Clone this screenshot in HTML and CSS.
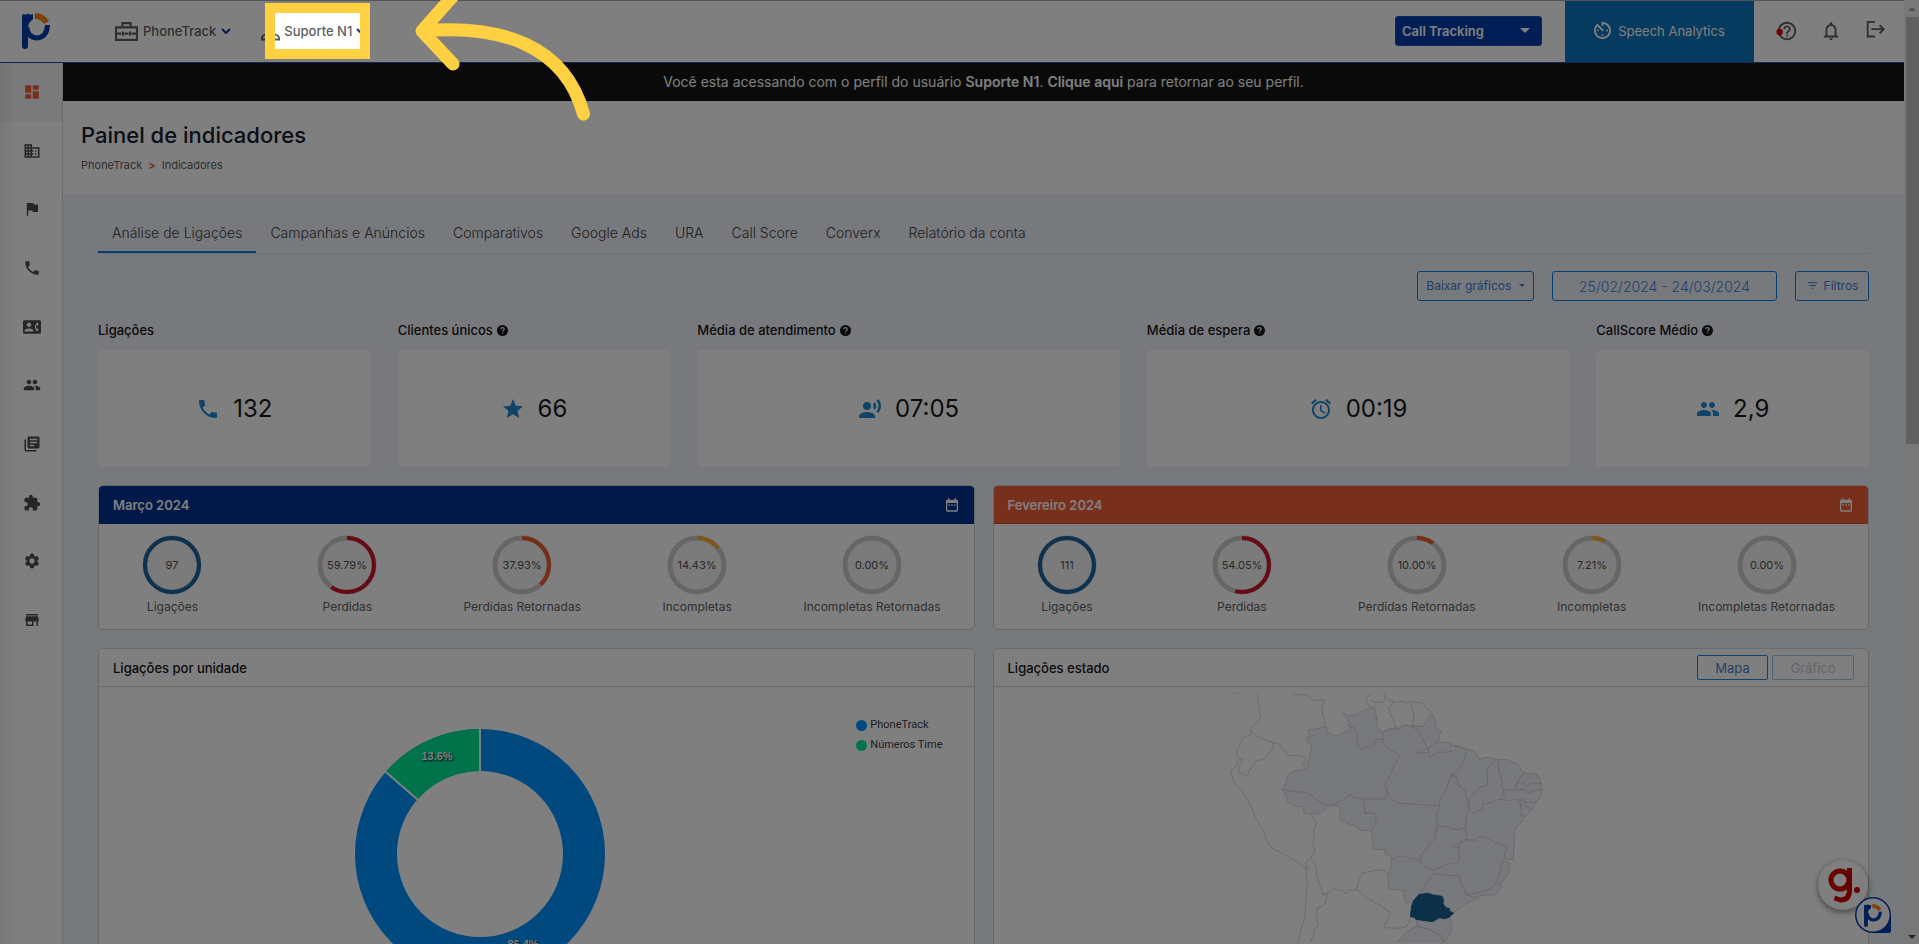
FILE: index.html
```html
<!DOCTYPE html>
<html lang="pt-BR">
<head>
<meta charset="utf-8">
<title>PhoneTrack - Painel de indicadores</title>
<link rel="stylesheet" href="styles.css">
</head>
<body>
<svg class="defs" aria-hidden="true">
  <symbol id="phone" viewBox="0 0 24 24"><path d="M6.62 10.79c1.44 2.83 3.76 5.14 6.59 6.59l2.2-2.2c.27-.27.67-.36 1.02-.24 1.12.37 2.33.57 3.57.57.55 0 1 .45 1 1V20c0 .55-.45 1-1 1-9.39 0-17-7.61-17-17 0-.55.45-1 1-1h3.5c.55 0 1 .45 1 1 0 1.25.2 2.45.57 3.57.11.35.03.74-.25 1.02l-2.2 2.2z"/></symbol>
  <symbol id="group" viewBox="0 0 24 24"><path d="M16 11c1.66 0 2.99-1.34 2.99-3S17.66 5 16 5c-1.66 0-3 1.34-3 3s1.34 3 3 3zm-8 0c1.66 0 2.99-1.34 2.99-3S9.66 5 8 5C6.34 5 5 6.34 5 8s1.34 3 3 3zm0 2c-2.33 0-7 1.17-7 3.5V19h14v-2.5c0-2.33-4.67-3.5-7-3.5zm8 0c-.29 0-.62.02-.97.05 1.16.84 1.97 1.97 1.97 3.45V19h6v-2.5c0-2.33-4.67-3.5-7-3.5z"/></symbol>
  <symbol id="calendar" viewBox="0 0 24 24"><path d="M9 11H7v2h2v-2zm4 0h-2v2h2v-2zm4 0h-2v2h2v-2zm2-7h-1V2h-2v2H8V2H6v2H5c-1.11 0-1.99.9-1.99 2L3 20c0 1.1.89 2 2 2h14c1.1 0 2-.9 2-2V6c0-1.1-.9-2-2-2zm0 16H5V9h14v11z"/></symbol>
  <symbol id="help" viewBox="0 0 12 12"><circle cx="6" cy="6" r="6"/><path d="M4.1 4.7c0-1.2.8-1.9 1.9-1.9s1.9.7 1.9 1.7c0 1.2-1.6 1.3-1.6 2.6M6.2 8.2v1.2" fill="none" stroke="#f1f3fa" stroke-width="1.3"/></symbol>
  <symbol id="chevron" viewBox="0 0 10 6"><path d="M1 1l4 4 4-4" fill="none" stroke="#06339b" stroke-width="2"/></symbol>
  <symbol id="brand" viewBox="0 0 28 36">
    <path d="M0 3Q0 1 2 1L4 2Q5 0 7 1Q9 2 11 1V6L8 9Q6 11 6 14V33Q6 36 3 36T0 33Z" fill="#003cac"/>
    <path d="M5 14A10 10 0 0 0 15 25Q25 24 25.500 12" fill="none" stroke="#003cac" stroke-width="5"/>
    <path d="M13 0Q22 0 27 8L22 11Q19 6 13 6Z" fill="#f98316"/>
  </symbol>
</svg>

<div class="app">
  <div class="screen">
    <header class="topbar">
      <a class="logo" href="#" aria-label="PhoneTrack"><svg><use href="#brand"/></svg></a>
      <button class="account">
        <svg class="toolbox" viewBox="1 0 22 19"><path d="M8 6V2h8v4M2 6h20v12H2zM2 12h5m3 0h4m3 0h5M8.500 10v4m7-4v4" fill="none" stroke="#5e5e5e" stroke-width="2"/></svg>
        PhoneTrack
        <svg class="chev"><use href="#chevron"/></svg>
      </button>
      <button class="account user">
        <svg class="person" viewBox="0 0 20 20"><circle cx="9" cy="6" r="3" fill="none" stroke="#5e5e5e" stroke-width="2"/><path d="M1 19v-2q1-4 9-4t9 4v2z" fill="none" stroke="#5e5e5e" stroke-width="2"/></svg>
        Suporte N1
        <svg class="chev"><use href="#chevron"/></svg>
      </button>
      <div class="product"><select aria-label="Produto"><option>Call Tracking</option></select></div>
      <button class="speech">
        <svg viewBox="3 3 18 18"><path d="M11 17c0 .55.45 1 1 1s1-.45 1-1-.45-1-1-1-1 .45-1 1zm0-14v4h2V5.080c3.390.49 6 3.390 6 6.920 0 3.870-3.130 7-7 7s-7-3.130-7-7c0-1.680.59-3.220 1.580-4.420L12 13l1.410-1.410-6.800-6.800v.02C4.420 6.450 3 9.050 3 12c0 4.970 4.020 9 9 9 4.970 0 9-4.030 9-9s-4.030-9-9-9h-1zm7 9c0-.55-.45-1-1-1s-1 .45-1 1 .45 1 1 1 1-.45 1-1zM6 12c0 .55.45 1 1 1s1-.45 1-1-.45-1-1-1-1 .45-1 1z"/></svg>
        Speech Analytics
      </button>
      <div class="tools">
        <button aria-label="Ajuda"><svg viewBox="0 0 24 24"><path d="M11 18h2v-2h-2v2zm1-16C6.480 2 2 6.480 2 12s4.480 10 10 10 10-4.480 10-10S17.520 2 12 2zm0 18c-4.410 0-8-3.590-8-8s3.590-8 8-8 8 3.590 8 8-3.590 8-8 8zm0-14c-2.210 0-4 1.790-4 4h2c0-1.100.9-2 2-2s2 .9 2 2c0 2-3 1.750-3 5h2c0-2.250 3-2.500 3-5 0-2.210-1.790-4-4-4z"/><circle cx="4" cy="13" r="3.500" fill="#d80000"/></svg></button>
        <button aria-label="Notificações"><svg viewBox="0 0 24 24"><path d="M12 22c1.100 0 2-.9 2-2h-4c0 1.100.9 2 2 2zm6-6v-5c0-3.070-1.630-5.640-4.500-6.320V4c0-.83-.67-1.500-1.500-1.500s-1.500.67-1.500 1.500v.68C7.640 5.360 6 7.920 6 11v5l-2 2v1h16v-1l-2-2zm-2 1H8v-6c0-2.480 1.510-4.500 4-4.500s4 2.020 4 4.500v6z"/></svg></button>
        <button aria-label="Sair"><svg viewBox="0 0 24 24"><path d="M12 2H4v16h8M8 10h13M17 5.500l4.500 4.500-4.500 4.500" fill="none" stroke="#5e5e5e" stroke-width="2"/></svg></button>
      </div>
    </header>

    <div class="body">
      <nav class="sidebar" aria-label="Menu">
        <a class="active" href="#" aria-label="Painel"><svg viewBox="0 0 24 24"><path d="M4 13h6q1 0 1-1V4q0-1-1-1H4Q3 3 3 4v8q0 1 1 1zm0 8h6q1 0 1-1v-4q0-1-1-1H4q-1 0-1 1v4q0 1 1 1zm10 0h6q1 0 1-1v-8q0-1-1-1h-6q-1 0-1 1v8q0 1 1 1zm-1-17v4q0 1 1 1h6q1 0 1-1V4q0-1-1-1h-6q-1 0-1 1z"/></svg></a>
        <a href="#" aria-label="Empresa"><svg viewBox="0 0 24 24"><path d="M12 7V3H2v18h20V7H12zM6 19H4v-2h2v2zm0-4H4v-2h2v2zm0-4H4V9h2v2zm0-4H4V5h2v2zm4 12H8v-2h2v2zm0-4H8v-2h2v2zm0-4H8V9h2v2zm0-4H8V5h2v2zm10 12h-8v-2h2v-2h-2v-2h2v-2h-2V9h8v10zm-2-8h-2v2h2v-2zm0 4h-2v2h2v-2z"/></svg></a>
        <a href="#" aria-label="Campanhas"><svg viewBox="0 0 24 24"><path d="M14.400 6L14 4H5v17h2v-7h5.600l.4 2h7V6z"/></svg></a>
        <a href="#" aria-label="Chamadas"><svg><use href="#phone"/></svg></a>
        <a href="#" aria-label="Contatos"><svg viewBox="0 0 24 24"><path d="M22 3H2C.9 3 0 3.900 0 5v14c0 1.100.9 2 2 2h20c1.100 0 1.990-.9 1.990-2L24 5c0-1.100-.9-2-2-2zM8 6c1.660 0 3 1.340 3 3s-1.340 3-3 3-3-1.340-3-3 1.340-3 3-3zm6 12H2v-1c0-2 4-3.100 6-3.100s6 1.100 6 3.100v1zm3.850-4h1.640L21 16l-1.990 1.990c-1.310-.98-2.280-2.380-2.730-3.990-.18-.64-.28-1.310-.28-2s.1-1.360.28-2c.45-1.620 1.420-3.010 2.730-3.990L21 8l-1.510 2h-1.640c-.22.63-.35 1.300-.35 2s.13 1.370.35 2z"/></svg></a>
        <a href="#" aria-label="Usuários"><svg><use href="#group"/></svg></a>
        <a href="#" aria-label="Relatórios"><svg viewBox="0 0 24 24"><path d="M4 6H2v14c0 1.100.9 2 2 2h14v-2H4V6zm16-4H8c-1.100 0-2 .9-2 2v12c0 1.100.9 2 2 2h12c1.100 0 2-.9 2-2V4c0-1.100-.9-2-2-2zm-1 9H9V9h10v2zm-4 4H9v-2h6v2zm4-8H9V5h10v2z"/></svg></a>
        <a href="#" aria-label="Integrações"><svg viewBox="0 0 24 24"><path d="M20.500 11H19V7c0-1.100-.9-2-2-2h-4V3.500C13 2.120 11.880 1 10.500 1S8 2.120 8 3.500V5H4c-1.100 0-1.990.9-1.990 2v3.800H3.500c1.490 0 2.700 1.210 2.700 2.700s-1.210 2.700-2.700 2.700H2V20c0 1.100.9 2 2 2h3.800v-1.500c0-1.490 1.210-2.700 2.700-2.700 1.490 0 2.700 1.210 2.700 2.700V22H17c1.100 0 2-.9 2-2v-4h1.500c1.380 0 2.500-1.120 2.500-2.500S21.880 11 20.500 11z"/></svg></a>
        <a href="#" aria-label="Configurações"><svg viewBox="0 0 24 24"><path d="M19.140 12.940c.04-.3.06-.61.06-.94 0-.32-.02-.64-.07-.94l2.030-1.580c.18-.14.23-.41.12-.61l-1.920-3.320c-.12-.22-.37-.29-.59-.22l-2.390.96c-.5-.38-1.030-.7-1.620-.94l-.36-2.540c-.04-.24-.24-.41-.48-.41h-3.840c-.24 0-.43.17-.47.41l-.36 2.540c-.59.24-1.130.57-1.620.94l-2.390-.96c-.22-.08-.47 0-.59.22L2.740 8.870c-.12.21-.08.47.12.61l2.030 1.580c-.05.3-.09.63-.09.94s.02.64.07.94l-2.030 1.580c-.18.14-.23.41-.12.61l1.920 3.320c.12.22.37.29.59.22l2.390-.96c.5.38 1.030.7 1.620.94l.36 2.540c.05.24.24.41.48.41h3.840c.24 0 .44-.17.47-.41l.36-2.540c.59-.24 1.130-.56 1.620-.94l2.390.96c.22.08.47 0 .59-.22l1.920-3.320c.12-.22.07-.47-.12-.61l-2.010-1.580zM12 15.600c-1.980 0-3.600-1.620-3.600-3.600s1.620-3.600 3.600-3.600 3.600 1.620 3.600 3.600-1.620 3.600-3.600 3.600z"/></svg></a>
        <a href="#" aria-label="Loja"><svg viewBox="0 0 24 24"><path d="M20 4H4v2h16V4zm1 10v-2l-1-5H4l-1 5v2h1v6h10v-6h4v6h2v-6h1zm-9 4H6v-4h6v4z"/></svg></a>
      </nav>

      <main class="main">
        <p class="notice">Você esta acessando com o perfil do usuário <b>Suporte N1</b>. <a href="#">Clique aqui</a> para retornar ao seu perfil.</p>
        <div class="heading">
          <h1>Painel de indicadores</h1>
          <p class="crumbs"><a href="#">PhoneTrack</a><b>&gt;</b><span>Indicadores</span></p>
        </div>

        <div class="content">
          <nav class="tabs" aria-label="Indicadores">
            <a class="on" href="#">Análise de Ligações</a><a href="#">Campanhas e Anúncios</a><a href="#">Comparativos</a><a href="#">Google Ads</a><a href="#">URA</a><a href="#">Call Score</a><a href="#">Converx</a><a href="#">Relatório da conta</a>
          </nav>

          <div class="filters">
            <button class="download">Baixar gráficos <i class="caret"></i></button>
            <input class="range" type="text" aria-label="Período" value="25/02/2024 - 24/03/2024">
            <button class="filter"><svg viewBox="0 0 24 24"><path d="M10 18h4v-2h-4v2zM3 6v2h18V6H3zm3 7h12v-2H6v2z"/></svg>Filtros</button>
          </div>

          <div class="stats">
            <section class="stat"><h2>Ligações</h2><div class="value"><svg><use href="#phone"/></svg>132</div></section>
            <section class="stat"><h2>Clientes únicos <svg><use href="#help"/></svg></h2><div class="value"><svg viewBox="0 0 24 24"><path d="M12 17.270L18.180 21l-1.640-7.030L22 9.240l-7.190-.61L12 2 9.190 8.630 2 9.240l5.460 4.730L5.820 21z"/></svg>66</div></section>
            <section class="stat wide"><h2>Média de atendimento <svg><use href="#help"/></svg></h2><div class="value"><svg viewBox="0 0 24 24"><circle cx="9" cy="9" r="4"/><path d="M9 15c-2.670 0-8 1.340-8 4v2h16v-2c0-2.660-5.330-4-8-4zM16.760 5.360l-1.680 1.690c.84 1.180.84 2.710 0 3.890l1.680 1.690c2.020-2.020 2.020-5.070 0-7.270zM20.070 2l-1.630 1.630c2.770 3.020 2.770 7.560 0 10.740L20.070 16c3.900-3.890 3.910-9.950 0-14z"/></svg>07:05</div></section>
            <section class="stat wide"><h2>Média de espera <svg><use href="#help"/></svg></h2><div class="value"><svg viewBox="0 0 24 24"><path d="M22 5.720l-4.600-3.860-1.290 1.530 4.600 3.860L22 5.720zM7.880 3.390L6.600 1.860 2 5.710l1.290 1.530 4.590-3.850zM12.500 8H11v6l4.750 2.850.75-1.230-4-2.370V8zM12 4c-4.970 0-9 4.030-9 9s4.020 9 9 9c4.970 0 9-4.030 9-9s-4.030-9-9-9zm0 16c-3.870 0-7-3.130-7-7s3.130-7 7-7 7 3.130 7 7-3.130 7-7 7z"/></svg>00:19</div></section>
            <section class="stat"><h2>CallScore Médio <svg><use href="#help"/></svg></h2><div class="value"><svg><use href="#group"/></svg>2,9</div></section>
          </div>

          <div class="panels">
            <section class="panel">
              <header class="blue"><h2>Março 2024</h2><svg><use href="#calendar"/></svg></header>
              <div class="rings">
                <figure><svg class="ring navy" viewBox="0 0 60 60"><circle cx="30" cy="30" r="27"/><circle pathLength="100" stroke-dasharray="100 100" cx="30" cy="30" r="27"/><text x="30" y="34">97</text></svg><figcaption>Ligações</figcaption></figure>
                <figure><svg class="ring red" viewBox="0 0 60 60"><circle cx="30" cy="30" r="27"/><circle pathLength="100" stroke-dasharray="59.790 100" cx="30" cy="30" r="27"/><text x="30" y="34">59.79%</text></svg><figcaption>Perdidas</figcaption></figure>
                <figure><svg class="ring orange" viewBox="0 0 60 60"><circle cx="30" cy="30" r="27"/><circle pathLength="100" stroke-dasharray="37.930 100" cx="30" cy="30" r="27"/><text x="30" y="34">37.93%</text></svg><figcaption>Perdidas Retornadas</figcaption></figure>
                <figure><svg class="ring amber" viewBox="0 0 60 60"><circle cx="30" cy="30" r="27"/><circle pathLength="100" stroke-dasharray="14.430 100" cx="30" cy="30" r="27"/><text x="30" y="34">14.43%</text></svg><figcaption>Incompletas</figcaption></figure>
                <figure><svg class="ring" viewBox="0 0 60 60"><circle cx="30" cy="30" r="27"/><text x="30" y="34">0.00%</text></svg><figcaption>Incompletas Retornadas</figcaption></figure>
              </div>
            </section>
            <section class="panel">
              <header class="coral"><h2>Fevereiro 2024</h2><svg><use href="#calendar"/></svg></header>
              <div class="rings">
                <figure><svg class="ring navy" viewBox="0 0 60 60"><circle cx="30" cy="30" r="27"/><circle pathLength="100" stroke-dasharray="100 100" cx="30" cy="30" r="27"/><text x="30" y="34">111</text></svg><figcaption>Ligações</figcaption></figure>
                <figure><svg class="ring red" viewBox="0 0 60 60"><circle cx="30" cy="30" r="27"/><circle pathLength="100" stroke-dasharray="54.050 100" cx="30" cy="30" r="27"/><text x="30" y="34">54.05%</text></svg><figcaption>Perdidas</figcaption></figure>
                <figure><svg class="ring orange" viewBox="0 0 60 60"><circle cx="30" cy="30" r="27"/><circle pathLength="100" stroke-dasharray="10 100" cx="30" cy="30" r="27"/><text x="30" y="34">10.00%</text></svg><figcaption>Perdidas Retornadas</figcaption></figure>
                <figure><svg class="ring amber" viewBox="0 0 60 60"><circle cx="30" cy="30" r="27"/><circle pathLength="100" stroke-dasharray="7.210 100" cx="30" cy="30" r="27"/><text x="30" y="34">7.21%</text></svg><figcaption>Incompletas</figcaption></figure>
                <figure><svg class="ring" viewBox="0 0 60 60"><circle cx="30" cy="30" r="27"/><text x="30" y="34">0.00%</text></svg><figcaption>Incompletas Retornadas</figcaption></figure>
              </div>
            </section>

            <section class="panel">
              <header><h2>Ligações por unidade</h2></header>
              <div class="donut">
                <svg class="pie" viewBox="0 0 256 256">
                  <circle cx="128" cy="128" r="104" fill="none" stroke="#0092ff" stroke-width="42"/>
                  <path d="M128 3A125 125 0 0 0 33.700 46L65.400 73.500A83 83 0 0 1 128 45Z" fill="#00e696"/>
                  <path d="M128 2V46M33 45.300L66 74" stroke="#fff" stroke-width="2"/>
                  <text x="85" y="34">13.6%</text><text x="171" y="222">86.4%</text>
                </svg>
                <ul class="legend"><li>PhoneTrack</li><li class="green">Números Time</li></ul>
              </div>
            </section>
            <section class="panel">
              <header><h2>Ligações estado</h2><div class="switch"><button>Mapa</button><button disabled>Gráfico</button></div></header>
              <svg class="map" viewBox="0 144 1386 768" role="img" aria-label="Mapa do Brasil">
                <g class="land">
                  <path d="M92 163h6M105 163h12M166 163l9 13v20l3 8-1 12 5 14-10 18-14 12-8 22 4 5-24 8-12 26-7 8-1 22 8 9M152 275l20 17 30 12 15 7 4 10-8 16-20 22-13 5-11 3-10 12-5 9-6 2-3 17-6 4-8-6-15-4-1-15 8-10 2-16-10 4-5 17-13 9-4 12 2 8 5 10-3 8 12 10 14 12 15 28 8 11 22 50 14 22 13 24 2 16 20 27 36 18 40 23 24 20 8-2 1-6M218 310l16 3 16 21 7 1 5 16 30-2 20 4 8 6-10 20 9 9"/>
                  <path d="M280 165l40 3 18 16 36-1-8 17 2 32 8 15-6 8 8 10"/>
                  <path d="M333 528l17 24-8 18 1 30-5 22 8 10-13 24-16 16 5 62-8 100-12 40-7 36M330 656l12 14 6 18 2 22 14 42 8 14 10 2-8 28-22 12-2 22 5 28-12 14-4 22-10 16M366 768l20-6 12-16 18 8h12l10 12 6-14h26M470 750L478 720 486 702 516 696 544 692 566 704M470 750L492 770 522 790 550 804 572 820 566 840 552 858 556 866 600 868 618 864 628 850 634 826"/>
                  <path d="M516 164l-16 12-2 12 14 20M516 187l10 4 10-3 12 3 6-8V164M556 172l10 8 14 8-14 22 12 30 10 24M580 190l30-2 6 4 20-4 30 4 28 28M636 190l-2 12 8 24-4 34M548 280l14-10 40-4"/>
                </g>
                <g class="states">
                  <path d="M325 272L350 270 378 262 384 280 398 288 412 290 428 282 442 278 450 266 466 264 472 280 472 300 480 322 490 335 496 322 508 326 522 318 524 300 548 302 552 318 570 332 600 348 578 390 556 436 560 455 556 478 465 478 450 465 438 478 415 490 386 500 352 484 320 460 280 458 247 452 258 432 262 410 282 396 304 392 322 388 328 360 334 320 322 306 322 292 342 290 325 285Z"/>
                  <path d="M426 222L445 230 466 228 484 218 500 214 512 204 524 206 530 236 528 258 536 270 548 280 548 302 524 300 520 320 508 326 496 322 490 335 474 322 470 280 460 264 442 262 448 252 440 238Z"/>
                  <path d="M548 282L570 272 602 268 606 258 628 260 655 272 668 300 684 330 650 342 684 340 720 340 752 338 776 322 800 332 792 364 778 390 752 410 740 450 720 482 718 500 592 493 568 476 565 462 556 436 578 390 600 348 570 332 552 318 548 302Z"/>
                  <path d="M632 261L668 262 684 240 694 222 704 238 708 268 724 276 716 288 718 300 700 318 684 330 668 300 655 272 640 266Z"/>
                  <path d="M684 330L700 316 712 308 756 312 750 334 736 340 712 340 690 356Z"/>
                  <path d="M758 320L780 320 800 332 820 334 832 350 836 362 860 354 888 360 866 384 862 400 864 438 846 442 826 458 808 480 806 510 796 500 800 480 794 454 776 440 768 410 752 410 778 390 792 364 800 332Z"/>
                  <path d="M888 360L896 364 896 396 904 420 908 450 912 460 900 484 870 492 848 500 848 508 822 522 806 508 808 480 826 458 846 442 864 438 862 400 866 384Z"/>
                  <path d="M896 362L922 361 950 374 972 402 950 430 948 452 928 456 912 450 906 440 904 410 895 384Z"/>
                  <path d="M972 402L1012 406 1020 420 1022 434 994 432 980 442 972 430 952 432Z"/>
                  <path d="M952 432L972 430 980 442 994 432 1022 434 1026 454 1000 452 986 462 978 452 948 452Z"/>
                  <path d="M912 452L948 456 978 452 986 462 1000 456 1026 454 1022 474 1008 490 980 490 970 482 930 486 900 480 912 468Z"/>
                  <path d="M958 484L980 490 1008 490 996 512 976 498Z"/>
                  <path d="M960 492L976 502 994 514 976 532 960 530 966 514Z"/>
                  <path d="M806 508L822 522 848 508 848 496 870 492 900 480 930 486 940 480 956 484 966 514 960 530 976 532 960 554 946 568 942 610 940 664 916 660 914 640 924 624 900 616 880 608 866 600 840 592 826 604 800 606 796 566 798 530Z"/>
                  <path d="M766 412L776 440 794 454 802 490 806 508 798 530 796 566 768 572 740 564 720 562 712 560 710 520 718 500 720 482 740 450 752 412Z"/>
                  <path d="M712 562L720 562 740 564 768 572 796 566 802 602 788 602 778 612 776 640 778 670 756 676 740 676 704 694 676 684 662 674 664 648 690 614 704 600Z"/>
                  <path d="M758 617h18v9h-18z"/>
                  <path d="M490 480H556L562 455 568 476 592 493 718 500 710 520 710 560 704 600 690 614 664 648 658 664 648 656 630 658 600 650 575 664 570 650 556 646V632L520 630 514 576 528 550 526 524 494 522Z"/>
                  <path d="M386 500L415 490 438 478 450 465 465 478 490 480 494 522 526 524 528 550 514 576 484 574 460 558 440 552 418 540 420 516 412 500Z"/>
                  <path d="M247 452L280 458 320 460 352 484 386 500 370 516 350 526 312 524 310 502 288 504 274 494 262 492 260 474Z"/>
                  <path d="M575 664L600 650 630 658 658 664 676 684 704 694 700 712 682 728 664 756 634 790 616 792 610 754 566 750 564 706 572 688Z"/>
                  <path d="M704 704L728 706 744 710 778 708 782 730 790 746 800 768 840 762 836 776 800 792 760 822 738 806 728 772 690 764 664 756 682 728Z"/>
                  <path d="M776 614L802 602 826 604 840 592 866 600 880 608 924 624 914 640 912 662 904 676 902 700 886 738 870 752 840 760 800 768 790 746 782 730 778 708 744 710 704 704 704 694 740 676 778 670Z"/>
                  <path d="M904 672L916 666 930 672 926 702 900 738 886 732 902 700Z"/>
                  <path d="M886 732L904 738 900 752 884 768 850 768 820 776 800 768 840 760 870 752Z"/>
                  <path d="M650 842L696 848 730 838 752 840 754 880 732 912 724 890 690 872 650 862Z"/>
                  <path d="M588 914L618 880 650 862 690 872 710 884 724 890 732 914Z"/>
                </g>
                <path class="selected" d="M658 766l26-3 14 5 28 4 4 12-1 10 8 12 13 3-3 6 14 8-14 12-14 4-14-3-12 6-10 6-50-7-3-6-13-2 4-32 6-16z"/>
              </svg>
            </section>
          </div>
        </div>
      </main>
    </div>
  </div>
  <div class="scrollbar" aria-hidden="true"><i class="up"></i><div class="thumb"></div><i class="down"></i></div>
</div>

<button class="glogo" aria-label="g."><svg viewBox="0 0 50 50"><g fill="none" stroke="#d00000" stroke-width="5"><circle cx="22" cy="20" r="9"/><path d="M31.500 8v22q0 10-9 10l-6-2"/></g><circle cx="39" cy="30" r="3" fill="#d00000"/></svg></button>
<button class="chat" aria-label="Chat PhoneTrack"><svg><use href="#brand"/></svg></button>
<div class="spotlight"></div>
<svg class="arrow" viewBox="410 0 190 124" aria-hidden="true"><path d="M583.500 114C565 45 500 24 422 31M453-4L422 31l31 33" fill="none" stroke="#ffd042" stroke-width="13" stroke-linecap="round" stroke-linejoin="round"/></svg>
</body>
</html>
```

FILE: styles.css
```css
* { box-sizing: border-box; }
body { margin: 0; height: 100vh; overflow: hidden; position: relative; font-family: Inter, "Liberation Sans", sans-serif; font-size: 14px; color: #4a4a4a; }
button, input, select { font: inherit; color: inherit; margin: 0; }
button { border: 0; background: none; padding: 0; }
a { color: inherit; text-decoration: none; }
h1, h2, p, figure, ul { margin: 0; padding: 0; }
svg { display: block; fill: currentColor; flex: none; }
.defs { position: absolute; width: 0; height: 0; }

.app { display: flex; height: 100vh; }
.screen { flex: 1; min-width: 0; display: flex; flex-direction: column; }

.topbar { height: 63px; flex: none; display: flex; align-items: center; padding-bottom: 2px; background: #fff; border-top: 1px solid #a5a6ae; border-bottom: 1px solid #1a4fa8; color: #5e5e5e; }
.logo { width: 115px; padding-left: 22px; }
.logo svg { width: 28px; height: 36px; }
.account { display: flex; align-items: center; gap: 5px; font-size: 13px; font-weight: 500; }
.account.user { margin-left: 30px; gap: 4px; }
.toolbox { width: 23px; height: 20px; }
.person { width: 19px; height: 20px; }
.chev { width: 10px; height: 6px; }
.product { margin-left: auto; margin-right: 23px; position: relative; }
.product select { appearance: none; width: 147px; height: 30px; padding: 0 6px; border: 1px solid #1c50b4; border-radius: 3px; background: #003cac; color: #fff; font-size: 13px; font-weight: 600; }
.product::after { content: ""; position: absolute; right: 12px; top: 12px; border: 5px solid transparent; border-top-color: #fff; }
.speech { align-self: stretch; width: 189px; margin-bottom: -2px; padding-bottom: 2px; display: flex; align-items: center; justify-content: center; gap: 7px; background: #0c74bc; color: #fff; font-size: 13px; }
.speech svg { width: 17px; height: 17px; }
.tools { display: flex; gap: 22px; padding: 0 18px 0 22px; }
.tools svg { width: 22px; height: 22px; }

.body { flex: 1; min-height: 0; display: flex; }
.sidebar { width: 63px; flex: none; display: grid; grid-template-rows: repeat(3, 59px 59px 58px) 59px; background: linear-gradient(90deg, #f2f2f2, #fff 18px); border-right: 1px solid #dcdde4; color: #4c4c4e; }
.sidebar a { display: grid; place-items: center; padding: 0 0 2px 1px; }
.sidebar a.active { color: #f1613a; background: linear-gradient(90deg, #e9e9e9, #f4f4f4 18px); }
.sidebar svg { width: 18px; height: 18px; }

.main { flex: 1; min-width: 0; background: #f1f3fa; }
.notice { height: 38px; line-height: 38px; text-align: center; background: #141517; color: #fff; font-size: 14px; }
.notice b, .notice a { font-weight: 600; }
.heading { background: #fff; height: 93px; padding: 20px 18px 0; }
h1 { font-size: 22px; line-height: 28px; font-weight: 500; color: #14202e; }
.crumbs { display: flex; gap: 6px; margin-top: 8px; font-size: 11px; line-height: 17px; color: #606060; }
.crumbs b { color: #f1613a; }

.content { padding: 19px 35px 0; }
.tabs { display: flex; border-bottom: 1px solid #dfe1e6; }
.tabs a { padding: 0 14px; height: 40px; line-height: 40px; font-size: 14px; font-weight: 300; color: #404144; }
.tabs a.on { border-bottom: 2px solid #0a7ee0; margin-bottom: -1px; }
.filters { display: flex; justify-content: flex-end; gap: 18px; margin-top: 17px; }
.filters > * { height: 30px; border: 1px solid #0a7ee0; border-radius: 3px; color: #3a7fd6; background: transparent; font-size: 12px; }
.filters button { padding-bottom: 2px; }
.download { width: 117px; }
.caret { display: inline-block; border: 3px solid transparent; border-top-color: currentColor; border-bottom: 0; vertical-align: 3px; margin-left: 4px; }
.filters .range { width: 225px; text-align: center; font-size: 14px; font-weight: 300; }
.filter { width: 74px; display: flex; align-items: center; justify-content: center; gap: 5px; }
.filter svg { width: 13px; height: 13px; }

.stats { display: grid; grid-template-columns: repeat(12, minmax(0, 1fr)); gap: 27px; margin-top: 20px; }
.stat { grid-column: span 2; }
.stat.wide { grid-column: span 3; }
h2 { font-size: 13px; line-height: 18px; font-weight: 500; color: #141416; }
.stat h2 { display: flex; align-items: center; gap: 4px; }
.stat h2 svg { width: 11px; height: 11px; }
.value { height: 117px; margin-top: 11px; border-radius: 5px; background: #fff; display: flex; align-items: center; justify-content: center; gap: 13px; font-size: 24px; color: #17181a; }
.value svg { width: 24px; height: 24px; color: #2189d2; }

.panels { display: grid; grid-template-columns: repeat(2, minmax(0, 1fr)); gap: 18px; margin-top: 18px; }
.panel { background: #fff; border: 1px solid #d2d3d6; border-radius: 5px; overflow: hidden; }
.panel > header { height: 38px; padding: 0 14px; display: flex; align-items: center; justify-content: space-between; border-bottom: 1px solid #d2d3d6; }
.panel > header svg { width: 16px; height: 16px; color: #fff; }
.panel > .blue { background: #003390; border-color: #003390; }
.panel > .coral { background: #f1613a; border-color: #d4552f; }
.blue h2, .coral h2 { color: #fff; font-weight: 600; }
.rings { display: grid; grid-template-columns: repeat(5, minmax(0, 1fr)); margin: 0 14px 0 -14px; padding: 11px 0 14px; }
.rings figure { display: flex; flex-direction: column; align-items: center; gap: 3px; font-size: 12px; line-height: 17px; color: #606164; white-space: nowrap; }
.ring { width: 60px; height: 60px; }
.ring circle { fill: #f6f6f7; stroke: #ccc; stroke-width: 5; }
.ring circle + circle { fill: none; stroke-width: 4; transform: rotate(-90deg); transform-origin: center; }
.navy circle + circle { stroke: #1b629c; }
.red circle + circle { stroke: #cf1426; }
.orange circle + circle { stroke: #ee5b2c; }
.amber circle + circle { stroke: #ffae33; }
.ring text { font-size: 11px; text-anchor: middle; fill: #505154; }
.donut { position: relative; padding: 39px 0 0 253px; height: 300px; }
.pie { width: 256px; height: 256px; }
.pie text { font: 700 11px "Liberation Sans", Arial, sans-serif; fill: #fff; text-anchor: middle; text-shadow: 1px 1px 2px #000; }
.legend { position: absolute; right: 31px; top: 28px; list-style: none; font: 11px/20px Roboto, sans-serif; color: #373d3f; }
.legend li { display: flex; align-items: center; gap: 3px; }
.legend li::before { content: ""; width: 11px; height: 11px; border-radius: 50%; background: #0092ff; }
.legend .green::before { background: #00e696; }
.switch { display: flex; gap: 4px; }
.switch button { height: 25px; width: 71px; border: 1px solid #1a86d8; border-radius: 2px; font-size: 13px; color: #4a86c8; }
.switch button:disabled { width: 82px; border-color: #9dcbee; color: #c6c8cc; }
.map { width: 462px; height: 256px; margin: 0 auto; }
.map path { stroke: #d5d6d9; stroke-width: 3; stroke-linejoin: round; }
.land path { fill: none; }
.states path { fill: #f1f3fa; }
.map .selected { fill: #18608f; stroke: #18608f; }

.scrollbar { width: 15px; flex: none; background: #f1f1f1; display: flex; flex-direction: column; align-items: center; padding: 7px 0 5px; }
.scrollbar i { border: 4px solid transparent; }
.scrollbar .up { border-top: 0; border-bottom-color: #a3a3a3; }
.scrollbar .down { border-bottom: 0; border-top-color: #505050; margin-top: auto; }
.thumb { width: 13px; height: 427px; margin: 6px 0 0 2px; background: #c1c1c1; }

.glogo { position: absolute; right: 51px; bottom: 34px; width: 50px; height: 50px; border-radius: 50%; background: #fff; box-shadow: 0 2px 6px rgba(0, 0, 0, .5); }
.chat { position: absolute; right: 28px; bottom: 11px; width: 36px; height: 36px; border-radius: 18px 18px 2px 18px; background: radial-gradient(circle at center, #fff 16px, #003cac 17px); display: grid; place-items: center; }
.chat svg { width: 18px; height: 23px; }
.spotlight { position: absolute; left: 265px; top: 3px; width: 105px; height: 56px; border: 10px solid #ffd042; box-shadow: 0 0 0 3000px rgba(0, 0, 0, .5); }
.arrow { position: absolute; left: 410px; top: 0; width: 190px; height: 124px; }
```
